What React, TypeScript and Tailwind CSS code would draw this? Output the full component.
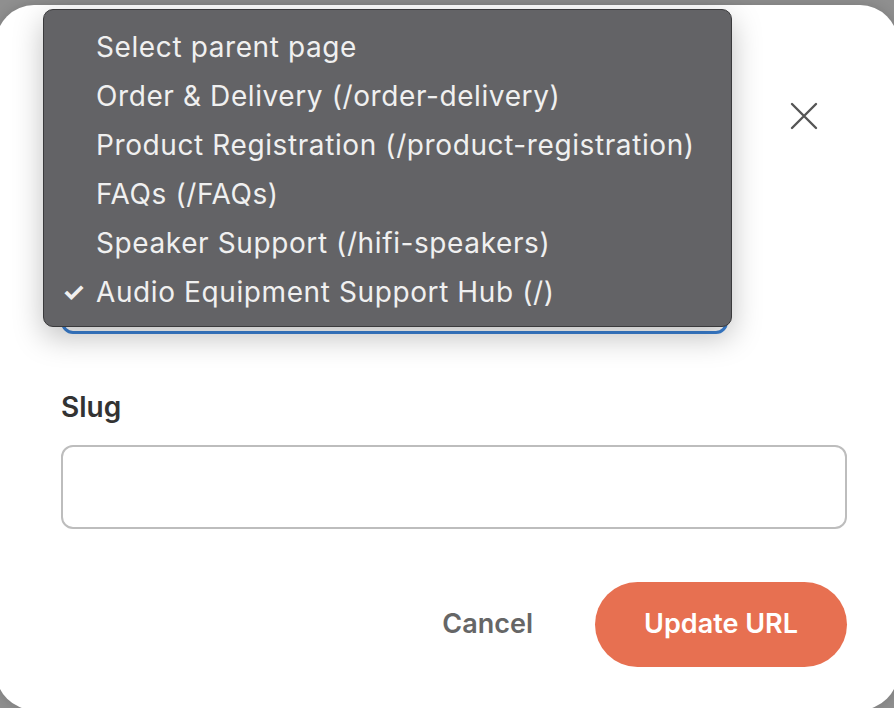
import React from 'react';

const options = [
    'Select parent page',
    'Order & Delivery (/order-delivery)',
    'Product Registration (/product-registration)',
    'FAQs (/FAQs)',
    'Speaker Support (/hifi-speakers)',
    'Audio Equipment Support Hub (/)',
];

const App: React.FC = () => {
    const selected = options.length - 1;

    return (
        <div className="w-[894px] h-[708px] overflow-hidden bg-[#8f8f8f] pt-[5px] font-['Inter',sans-serif]">
            <div className="relative mx-[-4px] h-[705px] rounded-[38px] bg-white pl-[65px] pr-[56px] pt-[96px] shadow-[0_0_12px_rgba(0,0,0,0.15)]">
                {/* header with close */}
                <div className="flex justify-end pr-[23px]">
                    <button type="button" className="text-[#555]">
                        <svg width="30" height="30" viewBox="0 0 30 30" fill="none" stroke="currentColor" strokeWidth="2.4" strokeLinecap="round">
                            <path d="M3 3 L27 27 M27 3 L3 27" />
                        </svg>
                    </button>
                </div>

                {/* parent page select (covered by open menu) */}
                <div className="mt-[147px] w-[667px] h-[56px] rounded-[12px] border-[3px] border-[#3b82d6]" />

                {/* slug */}
                <label className="block mt-[52px] text-[28px] font-semibold text-[#333]">Slug</label>
                <input
                    type="text"
                    className="mt-[17px] block w-[786px] h-[84px] rounded-[12px] border-2 border-[#bdbdbd] px-4 text-[26px] outline-none"
                />

                {/* actions */}
                <div className="mt-[53px] flex items-center justify-end gap-[62px] w-[786px]">
                    <button type="button" className="text-[27px] font-semibold text-[#666]">Cancel</button>
                    <button
                        type="button"
                        className="w-[252px] h-[85px] rounded-full bg-[#e77051] text-white text-[27px] font-semibold"
                    >
                        Update URL
                    </button>
                </div>

                {/* open native-style menu */}
                <div className="absolute left-[47px] top-[4px] w-[689px] h-[318px] rounded-[10px] border border-[#3a3a3c] bg-[#636366] pt-[12px] shadow-[0_10px_30px_rgba(0,0,0,0.25)]">
                    {options.map((opt, i) => (
                        <div key={i} className="flex items-center h-[49px] text-[28px] tracking-[0.6px] text-[#f0f0f0]">
                            <span className="w-[52px] pl-[18px] text-[26px] font-bold">{i === selected ? '✓' : ''}</span>
                            <span>{opt}</span>
                        </div>
                    ))}
                </div>
            </div>
        </div>
    );
};

export default App;
